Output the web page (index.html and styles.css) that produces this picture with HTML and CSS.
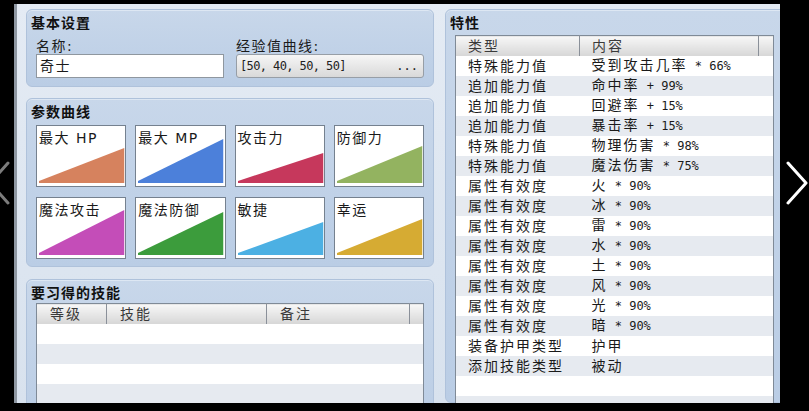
FILE: index.html
```html
<!DOCTYPE html>
<html lang="zh-CN">

<head>
    <meta charset="UTF-8">
    <meta name="viewport" content="width=device-width, initial-scale=1.0">
    <title>职业 - 奇士</title>
    <link rel="stylesheet" href="styles.css">
</head>

<body>
    <div class="screen">
        <!-- 左右翻页箭头 -->
        <svg class="nav nav-prev" width="22" height="44" viewBox="0 0 22 44">
            <polyline points="20,2 2,22 20,42" />
        </svg>

        <div class="window">
            <div class="col-left">
                <!-- 基本设置 -->
                <section class="panel basic">
                    <h2 class="panel-title">基本设置</h2>
                    <div class="basic-row">
                        <div class="field">
                            <label class="field-label">名称:</label>
                            <div class="input">奇士</div>
                        </div>
                        <div class="field">
                            <label class="field-label">经验值曲线:</label>
                            <div class="picker">
                                <span>[50, 40, 50, 50]</span>
                                <span class="dots">...</span>
                            </div>
                        </div>
                    </div>
                </section>

                <!-- 参数曲线 -->
                <section class="panel curves">
                    <h2 class="panel-title">参数曲线</h2>
                    <div class="curve-grid">
                        <div class="curve">
                            <svg viewBox="0 0 88 60" preserveAspectRatio="none"><polygon points="2,55 87,22 87,57 2,57" fill="#d6825e" /></svg>
                            <span class="curve-name">最大 HP</span>
                        </div>
                        <div class="curve">
                            <svg viewBox="0 0 88 60" preserveAspectRatio="none"><polygon points="2,55 87,13 87,57 2,57" fill="#4c80da" /></svg>
                            <span class="curve-name">最大 MP</span>
                        </div>
                        <div class="curve">
                            <svg viewBox="0 0 88 60" preserveAspectRatio="none"><polygon points="2,55 87,27 87,57 2,57" fill="#c6385c" /></svg>
                            <span class="curve-name">攻击力</span>
                        </div>
                        <div class="curve">
                            <svg viewBox="0 0 88 60" preserveAspectRatio="none"><polygon points="2,55 87,20 87,57 2,57" fill="#93b360" /></svg>
                            <span class="curve-name">防御力</span>
                        </div>
                        <div class="curve">
                            <svg viewBox="0 0 88 60" preserveAspectRatio="none"><polygon points="2,55 87,12 87,57 2,57" fill="#c44db8" /></svg>
                            <span class="curve-name">魔法攻击</span>
                        </div>
                        <div class="curve">
                            <svg viewBox="0 0 88 60" preserveAspectRatio="none"><polygon points="2,55 87,14 87,57 2,57" fill="#3c9c3c" /></svg>
                            <span class="curve-name">魔法防御</span>
                        </div>
                        <div class="curve">
                            <svg viewBox="0 0 88 60" preserveAspectRatio="none"><polygon points="2,55 87,24 87,57 2,57" fill="#4cb0e3" /></svg>
                            <span class="curve-name">敏捷</span>
                        </div>
                        <div class="curve">
                            <svg viewBox="0 0 88 60" preserveAspectRatio="none"><polygon points="2,55 87,21 87,57 2,57" fill="#d6ab33" /></svg>
                            <span class="curve-name">幸运</span>
                        </div>
                    </div>
                </section>

                <!-- 要习得的技能 -->
                <section class="panel skills">
                    <h2 class="panel-title">要习得的技能</h2>
                    <table class="grid grid-skills">
                        <colgroup>
                            <col style="width: 70px">
                            <col style="width: 160px">
                            <col style="width: 143px">
                            <col>
                        </colgroup>
                        <thead>
                            <tr><th>等级</th><th>技能</th><th>备注</th><th></th></tr>
                        </thead>
                        <tbody>
                            <tr><td></td><td></td><td></td><td></td></tr>
                            <tr><td></td><td></td><td></td><td></td></tr>
                            <tr><td></td><td></td><td></td><td></td></tr>
                            <tr><td></td><td></td><td></td><td></td></tr>
                            <tr><td></td><td></td><td></td><td></td></tr>
                        </tbody>
                    </table>
                </section>
            </div>

            <!-- 特性 -->
            <section class="panel traits">
                <h2 class="panel-title">特性</h2>
                <table class="grid grid-traits">
                    <colgroup>
                        <col style="width: 124px">
                        <col style="width: 179px">
                        <col>
                    </colgroup>
                    <thead>
                        <tr><th>类型</th><th>内容</th><th></th></tr>
                    </thead>
                    <tbody>
                        <tr><td>特殊能力值</td><td>受到攻击几率<span class="num"> * 66%</span></td><td></td></tr>
                        <tr><td>追加能力值</td><td>命中率<span class="num"> + 99%</span></td><td></td></tr>
                        <tr><td>追加能力值</td><td>回避率<span class="num"> + 15%</span></td><td></td></tr>
                        <tr><td>追加能力值</td><td>暴击率<span class="num"> + 15%</span></td><td></td></tr>
                        <tr><td>特殊能力值</td><td>物理伤害<span class="num"> * 98%</span></td><td></td></tr>
                        <tr><td>特殊能力值</td><td>魔法伤害<span class="num"> * 75%</span></td><td></td></tr>
                        <tr><td>属性有效度</td><td>火<span class="num"> * 90%</span></td><td></td></tr>
                        <tr><td>属性有效度</td><td>冰<span class="num"> * 90%</span></td><td></td></tr>
                        <tr><td>属性有效度</td><td>雷<span class="num"> * 90%</span></td><td></td></tr>
                        <tr><td>属性有效度</td><td>水<span class="num"> * 90%</span></td><td></td></tr>
                        <tr><td>属性有效度</td><td>土<span class="num"> * 90%</span></td><td></td></tr>
                        <tr><td>属性有效度</td><td>风<span class="num"> * 90%</span></td><td></td></tr>
                        <tr><td>属性有效度</td><td>光<span class="num"> * 90%</span></td><td></td></tr>
                        <tr><td>属性有效度</td><td>暗<span class="num"> * 90%</span></td><td></td></tr>
                        <tr><td>装备护甲类型</td><td>护甲</td><td></td></tr>
                        <tr><td>添加技能类型</td><td>被动</td><td></td></tr>
                        <tr><td></td><td></td><td></td></tr>
                        <tr><td></td><td></td><td></td></tr>
                    </tbody>
                </table>
            </section>
        </div>

        <svg class="nav nav-next" width="22" height="44" viewBox="0 0 22 44">
            <polyline points="2,2 20,22 2,42" />
        </svg>
    </div>
</body>

</html>
```

FILE: styles.css
```css
* {
    margin: 0;
    padding: 0;
    box-sizing: border-box;
}

body {
    background: #000;
    font-family: "DejaVu Sans", "Noto Sans CJK SC", sans-serif;
    font-size: 14px;
    color: #1a1a1a;
}

.screen {
    position: relative;
    width: 809px;
    height: 411px;
    padding: 4px 0 0 14px;
    overflow: hidden;
}

/* 翻页箭头 */
.nav {
    position: absolute;
    top: 161px;
    fill: none;
    stroke-width: 3;
    stroke-linecap: round;
    stroke-linejoin: round;
}

.nav-prev {
    left: -12px;
    stroke: #7c7c7c;
}

.nav-next {
    left: 786px;
    stroke: #fff;
}

.window {
    display: flex;
    gap: 11px;
    width: 766px;
    height: 399px;
    padding: 5px 0 0 9px;
    overflow: hidden;
    background: linear-gradient(#e4ebf4, #d8e2ee);
    border-left: 3px solid #8e97a2;
}

.col-left {
    display: flex;
    flex-direction: column;
    width: 408px;
    flex-shrink: 0;
}

.panel {
    background: linear-gradient(#c8d7ea, #bacde5);
    border: 1px solid #afc2db;
    border-radius: 6px;
    box-shadow: inset 0 1px 0 #dde7f3;
    padding: 4px 9px 7px 9px;
}

.panel-title {
    margin-left: -5px;
    font-size: 14px;
    font-weight: bold;
    line-height: 18px;
    letter-spacing: 1px;
    color: #111;
}

/* 基本设置 */
.basic {
    padding-bottom: 8px;
}

.basic-row {
    display: grid;
    grid-template-columns: 1fr 1fr;
    column-gap: 12px;
    margin-top: 6px;
}

.field-label {
    display: block;
    line-height: 16px;
    letter-spacing: 1.5px;
}

.input {
    height: 24px;
    line-height: 22px;
    padding-left: 3px;
    background: #fff;
    border: 1px solid #8f979f;
    letter-spacing: 1.5px;
}

.picker {
    display: flex;
    justify-content: space-between;
    height: 24px;
    line-height: 22px;
    padding: 0 5px 0 3px;
    background: linear-gradient(#f6f6f6, #d9d9d9);
    border: 1px solid #979ea6;
    border-radius: 3px;
    font-family: "DejaVu Sans Mono", monospace;
    font-size: 12px;
    letter-spacing: -0.6px;
    color: #222;
}

.picker .dots {
    letter-spacing: 0;
}

/* 参数曲线 */
.curves {
    margin-top: 11px;
}

.curve-grid {
    display: grid;
    grid-template-columns: repeat(4, 1fr);
    gap: 10px 9px;
    margin-top: 4px;
}

.curve {
    display: grid;
    height: 62px;
    background: #fff;
    border: 1px solid #75818f;
}

.curve>* {
    grid-area: 1 / 1;
}

.curve svg {
    width: 100%;
    height: 100%;
}

.curve-name {
    align-self: start;
    padding: 4px 0 0 2px;
    line-height: 16px;
    letter-spacing: 1.5px;
}

/* 表格 */
.skills {
    margin-top: 12px;
    flex-shrink: 0;
}

.grid {
    width: 100%;
    table-layout: fixed;
    border-collapse: collapse;
    border: 1px solid #7f8a97;
    background: #fff;
}

.grid-skills {
    margin-top: 1px;
}

.grid-traits {
    margin-top: 3px;
}

.grid tr {
    height: 20px;
}

.grid th {
    height: 20px;
    padding: 0 12px;
    line-height: 16px;
    text-align: left;
    font-weight: normal;
    color: #3a3a3a;
    letter-spacing: 2px;
    background: linear-gradient(#f7f7f7, #d6d6d6);
    border-right: 1px solid #8a9099;
}

.grid-skills th {
    padding-left: 13px;
}

.grid th:last-child {
    border-right: none;
}

.grid td {
    height: 20px;
    padding: 0 12px;
    line-height: 16px;
    white-space: nowrap;
    letter-spacing: 2px;
}

.grid tbody tr:nth-child(even) {
    background: #e6eaf0;
}

.num {
    font-family: "DejaVu Sans Mono", monospace;
    font-size: 12px;
    letter-spacing: 0;
}

/* 特性 */
.traits {
    width: 342px;
    flex-shrink: 0;
    padding: 4px 12px 0 9px;
}
```
